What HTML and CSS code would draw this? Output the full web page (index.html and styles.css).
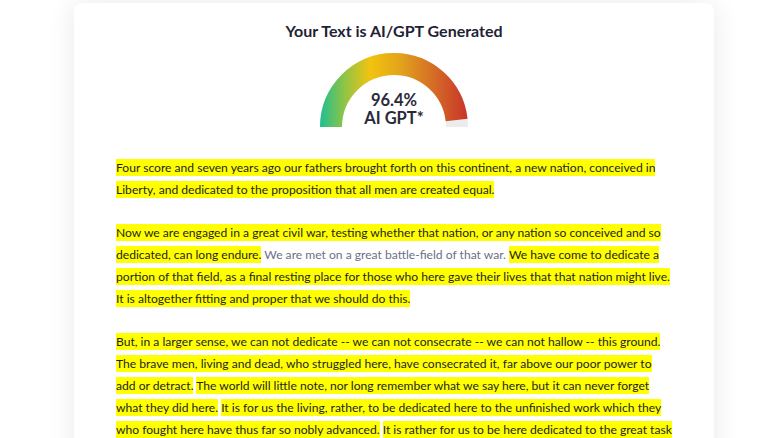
FILE: index.html
```html
<!DOCTYPE html>
<html lang="en">
<head>
<meta charset="utf-8">
<title>AI/GPT Detector Result</title>
<link rel="stylesheet" href="styles.css">
</head>
<body>
<main class="card">
  <h1 class="title">Your Text is AI/GPT Generated</h1>
  <div class="gauge">
    <svg class="gauge-svg" width="148" height="74" viewBox="0 0 148 74">
      <defs>
        <linearGradient id="g" gradientUnits="userSpaceOnUse" x1="0" y1="0" x2="148" y2="0">
          <stop offset="0" stop-color="#1fbf91"/>
          <stop offset="0.16" stop-color="#8cc447"/>
          <stop offset="0.34" stop-color="#f2c30f"/>
          <stop offset="0.55" stop-color="#e2a21c"/>
          <stop offset="0.78" stop-color="#d46926"/>
          <stop offset="1" stop-color="#c8332a"/>
        </linearGradient>
      </defs>
      <path d="M 11 74 A 63 63 0 0 1 137 74" fill="none" stroke="#ececec" stroke-width="22"/>
      <path d="M 11 74 A 63 63 0 0 1 137 74" fill="none" stroke="url(#g)" stroke-width="22" pathLength="100" stroke-dasharray="96.4 100"/>
    </svg>
    <div class="gauge-label">
      <span>96.4%</span>
      <span>AI GPT*</span>
    </div>
  </div>
  <div class="content">
    <p><span class="ai">Four score and seven years ago our fathers brought forth on this continent, a new nation, conceived in Liberty, and dedicated to the proposition that all men are created equal.</span></p>
    <p><span class="ai">Now we are engaged in a great civil war, testing whether that nation, or any nation so conceived and so dedicated, can long endure.</span> <span class="human">We are met on a great battle-field of that war.</span> <span class="ai">We have come to dedicate a portion of that field, as a final resting place for those who here gave their lives that that nation might live.</span> <span class="ai">It is altogether fitting and proper that we should do this.</span></p>
    <p><span class="ai">But, in a larger sense, we can not dedicate -- we can not consecrate -- we can not hallow -- this ground.</span> <span class="ai">The brave men, living and dead, who struggled here, have consecrated it, far above our poor power to add or detract.</span> <span class="ai">The world will little note, nor long remember what we say here, but it can never forget what they did here.</span> <span class="ai">It is for us the living, rather, to be dedicated here to the unfinished work which they who fought here have thus far so nobly advanced.</span> <span class="ai">It is rather for us to be here dedicated to the great task remaining before us -- that from these honored dead we take increased devotion to that cause for which they gave the last full measure of devotion.</span></p>
  </div>
</main>
</body>
</html>
```
FILE: styles.css
```css
html, body {
  margin: 0;
  padding: 0;
  background: #ffffff;
  overflow: hidden;
}
body {
  font-family: Lato, "Open Sans", sans-serif;
  color: #222230;
}
.card {
  box-sizing: border-box;
  width: 640px;
  margin: 3px 0 0 74px;
  padding: 17px 42px 20px;
  background: #ffffff;
  border-radius: 8px;
  box-shadow: 0 0 28px rgba(0, 0, 0, 0.09);
  min-height: 460px;
}
.title {
  margin: 0;
  text-align: center;
  font-size: 16px;
  line-height: 22px;
  font-weight: 700;
  color: #1f2233;
}
.gauge {
  position: relative;
  width: 148px;
  height: 74px;
  margin: 11px auto 0;
}
.gauge-svg {
  display: block;
}
.gauge-label {
  position: absolute;
  left: 0;
  right: 0;
  bottom: 0;
  display: flex;
  flex-direction: column;
  align-items: center;
  font-size: 16.5px;
  line-height: 18px;
  font-weight: 700;
  color: #2a2a3a;
}
.content {
  margin-top: 30px;
  font-size: 12.1px;
  line-height: 22px;
  color: #1e1e24;
}
.content p {
  margin: 0 0 21px;
}
.ai {
  background: #ffff00;
  padding: 1px 0;
}
.human {
  color: #6b6f86;
}
```
